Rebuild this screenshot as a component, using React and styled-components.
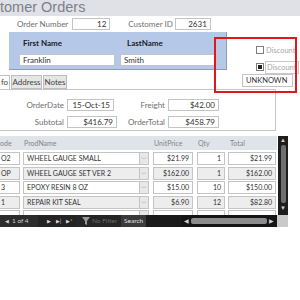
import React from 'react';
import styled, { createGlobalStyle } from 'styled-components';

const Global = createGlobalStyle`
  html, body { margin: 0; padding: 0; background: #fff; }
  body { width: 300px; height: 300px; overflow: hidden; font-family: Lato, "Liberation Sans", Arial, sans-serif; }
`;

const Page = styled.div`
  position: relative;
  width: 300px;
  height: 300px;
  overflow: hidden;
  font-size: 8px;
  color: #333;
`;

const TitleBar = styled.div`
  height: 16px;
  background: #dfe1e7;
  color: #7c8089;
  font-family: "Liberation Sans", Arial, sans-serif;
  font-size: 14.5px;
  line-height: 14px;
  white-space: nowrap;
`;

const TopRow = styled.div`
  display: flex;
  align-items: center;
  height: 12px;
  margin-top: 2px;
  padding-left: 17px;
  margin-bottom: 2px;
`;

const Label = styled.span`
  color: #6f6f6f;
  white-space: nowrap;
  margin-left: ${p => p.ml || '0px'};
`;

const Field = styled.div`
  box-sizing: border-box;
  height: ${p => p.h || '12px'};
  width: ${p => p.w};
  margin-left: ${p => p.ml || '0px'};
  border: 1px solid #c4c4c4;
  background: ${p => p.shade ? '#ededed' : '#fff'};
  color: #333;
  padding: 0 3px;
  line-height: ${p => p.h ? `calc(${p.h} - 2px)` : '10px'};
  text-align: ${p => p.right ? 'right' : 'left'};
  white-space: nowrap;
  overflow: hidden;
  flex-shrink: 0;
`;

const Middle = styled.div`
  display: flex;
`;

const LeftCol = styled.div`
  width: 227px;
  flex-shrink: 0;
`;

const NameBox = styled.div`
  box-sizing: border-box;
  margin-left: 9px;
  width: 218px;
  height: 38px;
  background: #b6c8e8;
  border-right: 1px solid #8f9cb3;
  border-bottom: 1px solid #8f9cb3;
  display: grid;
  grid-template-columns: 101px 97px;
  padding: 6px 0 0 10px;
  row-gap: 3px;
`;

const NameLabel = styled.div`
  font-weight: bold;
  color: #1c1c1c;
  padding-left: ${p => p.pl || '4px'};
  line-height: 10px;
`;

const Tabs = styled.div`
  display: flex;
  gap: 1px;
  margin-top: 5px;
  height: 14px;
`;

const Tab = styled.div`
  box-sizing: border-box;
  height: 14px;
  line-height: 13px;
  text-align: center;
  overflow: hidden;
  white-space: nowrap;
  color: #444;
  border: 1px solid #bdbdbd;
  border-bottom: ${p => p.active ? 'none' : '1px solid #bdbdbd'};
  border-left: ${p => p.first ? 'none' : '1px solid #bdbdbd'};
  background: ${p => p.active ? '#fff' : '#e6e6e6'};
  width: ${p => p.w};
`;

const RightCol = styled.div`
  display: flex;
  flex-direction: column;
  align-items: flex-start;
  padding-left: 15px;
  padding-top: 13px;
`;

const CheckRow = styled.div`
  display: flex;
  align-items: center;
  height: ${p => p.h || '10px'};
  margin-left: 14px;
  margin-bottom: ${p => p.mb || '0px'};
  gap: 2px;
  color: #a8a8a8;
  font-size: 7.5px;
  white-space: nowrap;
`;

const Box = styled.div`
  box-sizing: border-box;
  width: 8px;
  height: 8px;
  border: 1px solid #7d7d7d;
  background: #fff;
  display: flex;
  align-items: center;
  justify-content: center;
  &::after {
    content: '';
    display: ${p => p.checked ? 'block' : 'none'};
    width: 4px;
    height: 4px;
    background: #222;
  }
`;

const FramedText = styled.span`
  border: 1px solid #c8c8c8;
  padding: 1px 2px 1px 1px;
  line-height: 9px;
  margin-left: -1px;
`;

const Highlight = styled.div`
  position: absolute;
  left: 214px;
  top: 37px;
  width: 83px;
  height: 56px;
  box-sizing: border-box;
  border: 2px solid #e2161d;
  pointer-events: none;
`;

const Panel = styled.div`
  box-sizing: border-box;
  width: 276px;
  height: 42px;
  border: 1px solid #c6c6c6;
  border-left: none;
  padding-top: 7px;
  display: grid;
  grid-template-columns: 64px 52px 49px 54px;
  row-gap: 2px;
  align-items: center;
`;

const PanelCell = styled.div`
  display: flex;
  justify-content: ${p => p.end ? 'flex-end' : 'flex-start'};
  padding-left: ${p => p.pl || '0px'};
`;

const GridArea = styled.div`
  display: flex;
  margin-top: 5px;
  height: 79px;
  font-size: 7px;
`;

const Table = styled.div`
  width: 277px;
  overflow: hidden;
`;

const HeadRow = styled.div`
  display: flex;
  height: 14px;
  background: #dfe3ea;
  color: #858585;
  line-height: 14px;
  margin-bottom: 2px;
`;

const Row = styled.div`
  display: flex;
  height: 14.5px;
`;

const HeadCell = styled.div`
  width: ${p => p.w};
  margin-left: ${p => p.ml || '0px'};
  padding-left: ${p => p.pl || '1px'};
  box-sizing: border-box;
  flex-shrink: 0;
`;

const Combo = styled.div`
  display: flex;
  margin-left: 3px;
  flex-shrink: 0;
`;

const DropBtn = styled.div`
  box-sizing: border-box;
  width: 9px;
  height: 13px;
  border: 1px solid #c4c4c4;
  border-left: none;
  background: #e8e8e8;
  color: #777;
  font-size: 6px;
  line-height: 11px;
  text-align: center;
`;

const VScroll = styled.div`
  width: 10px;
  margin-left: 1px;
  background: #1d1d1d;
  display: flex;
  flex-direction: column;
  align-items: center;
  justify-content: space-between;
  padding: 1px 0 4px;
  box-sizing: border-box;
`;

const Thumb = styled.div`
  width: 5px;
  flex: 1;
  margin: 2px 0;
  background: #6e6e6e;
  border-radius: 2px;
`;

const Arrow = styled.div`
  color: #cfcfcf;
  font-size: 6px;
  line-height: 6px;
`;

const NavRow = styled.div`
  display: flex;
  height: 12px;
`;

const NavBar = styled.div`
  width: 277px;
  display: flex;
  align-items: center;
  background: #1f1f1f;
  color: #cfcfcf;
  font-size: 6.5px;
  line-height: 8px;
`;

const NavSeg = styled.div`
  display: flex;
  align-items: center;
  gap: ${p => p.gap || '3px'};
  height: 12px;
  width: ${p => p.w || 'auto'};
  padding: 0 ${p => p.pr || '0px'} 0 ${p => p.pl || '0px'};
  box-sizing: border-box;
  background: ${p => p.bg || 'transparent'};
  color: ${p => p.fg || '#cfcfcf'};
  flex-shrink: 0;
  white-space: nowrap;
`;

const Tiny = styled.span`
  font-size: 5px;
`;

const HScroll = styled.div`
  flex: 1;
  display: flex;
  align-items: center;
  gap: 2px;
  height: 12px;
  background: #151515;
  padding: 0 3px;
`;

const HThumb = styled.div`
  flex: 1;
  height: 6px;
  background: #8c8c8c;
  border-radius: 2px;
`;

const Corner = styled.div`
  width: 11px;
  background: #c9c9c9;
`;

const rows = [
  { code: 'O2', name: 'WHEEL GAUGE SMALL', price: '$21.99', qty: '1', total: '$21.99' },
  { code: 'OP', name: 'WHEEL GAUGE SET VER 2', price: '$162.00', qty: '1', total: '$162.00' },
  { code: '3', name: 'EPOXY RESIN 8 OZ', price: '$15.00', qty: '10', total: '$150.00' },
  { code: '1', name: 'REPAIR KIT SEAL', price: '$6.90', qty: '12', total: '$82.80' },
  { code: '', name: '', price: '', qty: '', total: '', blank: true },
];

const Funnel = () => (
  <svg width="8" height="8" viewBox="0 0 8 8">
    <path d="M0 0h8L5 4v4L3 7V4z" fill="#9a9a9a" />
  </svg>
);

export default function App() {
  return (
    <Page>
      <Global />
      <TitleBar>tomer Orders</TitleBar>
      <TopRow>
        <Label>Order Number</Label>
        <Field w="38px" ml="4px" right>12</Field>
        <Label ml="18px">Customer ID</Label>
        <Field w="36px" ml="2px" right>2631</Field>
      </TopRow>

      <Middle>
        <LeftCol>
          <NameBox>
            <NameLabel>First Name</NameLabel>
            <NameLabel pl="7px">LastName</NameLabel>
            <Field w="96px">Franklin</Field>
            <Field w="97px">Smith</Field>
          </NameBox>
          <Tabs>
            <Tab active first w="10px">fo</Tab>
            <Tab w="31px">Address</Tab>
            <Tab w="24px">Notes</Tab>
          </Tabs>
        </LeftCol>
        <RightCol>
          <CheckRow mb="6px">
            <Box />
            <span>Discount</span>
          </CheckRow>
          <CheckRow h="12px" mb="1px">
            <Box checked />
            <FramedText>Discount</FramedText>
          </CheckRow>
          <Field w="51px" h="13px" style={{ fontSize: 7.5 }}>UNKNOWN</Field>
        </RightCol>
      </Middle>

      <Panel>
        <PanelCell end><Label>OrderDate</Label></PanelCell>
        <PanelCell pl="3px"><Field w="47px" right>15-Oct-15</Field></PanelCell>
        <PanelCell end><Label>Freight</Label></PanelCell>
        <PanelCell pl="3px"><Field w="51px" right>$42.00</Field></PanelCell>
        <PanelCell end><Label>Subtotal</Label></PanelCell>
        <PanelCell pl="3px"><Field w="50px" right>$416.79</Field></PanelCell>
        <PanelCell end><Label>OrderTotal</Label></PanelCell>
        <PanelCell pl="3px"><Field w="51px" right>$458.79</Field></PanelCell>
      </Panel>

      <GridArea>
        <Table>
          <HeadRow>
            <HeadCell w="20px" pl="0px">ode</HeadCell>
            <HeadCell w="126px" ml="3px">ProdName</HeadCell>
            <HeadCell w="40px" ml="4px">UnitPrice</HeadCell>
            <HeadCell w="28px" ml="4px">Qty</HeadCell>
            <HeadCell w="48px" ml="3px" pl="2px">Total</HeadCell>
          </HeadRow>
          {rows.map((r, i) => {
            const shade = i % 2 === 1;
            return (
              <Row key={i}>
                <Field w="20px" h="13px" shade={shade} style={{ borderLeft: 'none', paddingLeft: 1 }}>{r.code}</Field>
                <Combo>
                  <Field w="117px" h="13px" shade={shade}>{r.name}</Field>
                  <DropBtn>{r.blank ? null : '﹀'}</DropBtn>
                </Combo>
                <Field w="40px" h="13px" ml="4px" shade={shade} right>{r.price}</Field>
                <Field w="28px" h="13px" ml="4px" shade={shade} right>{r.qty}</Field>
                <Field w="48px" h="13px" ml="3px" shade={shade} right>{r.total}</Field>
              </Row>
            );
          })}
        </Table>
        <VScroll>
          <Arrow>▲</Arrow>
          <Thumb />
          <Arrow>▼</Arrow>
        </VScroll>
      </GridArea>

      <NavRow>
        <NavBar>
          <NavSeg w="38px" pl="5px" bg="#2c2c2c">
            <Tiny>◀</Tiny>
            <span>1 of 4</span>
          </NavSeg>
          <NavSeg w="38px" pl="9px" bg="#242424" fg="#d8d8d8" gap="5px">
            <Tiny>▶</Tiny>
            <Tiny>▶|</Tiny>
            <Tiny>▶*</Tiny>
          </NavSeg>
          <NavSeg w="45px" pl="6px" bg="#262626" fg="#6a6a6a" gap="2px">
            <Funnel />
            <span>No Filter</span>
          </NavSeg>
          <NavSeg pl="3px" pr="3px" bg="#3a3a3a" fg="#e0e0e0">
            <span>Search</span>
          </NavSeg>
          <NavSeg w="35px" bg="#1a1a1a" />
          <HScroll>
            <Arrow>◀</Arrow>
            <HThumb />
            <Arrow>▶</Arrow>
          </HScroll>
        </NavBar>
        <Corner />
      </NavRow>
      <Highlight />
    </Page>
  );
}
